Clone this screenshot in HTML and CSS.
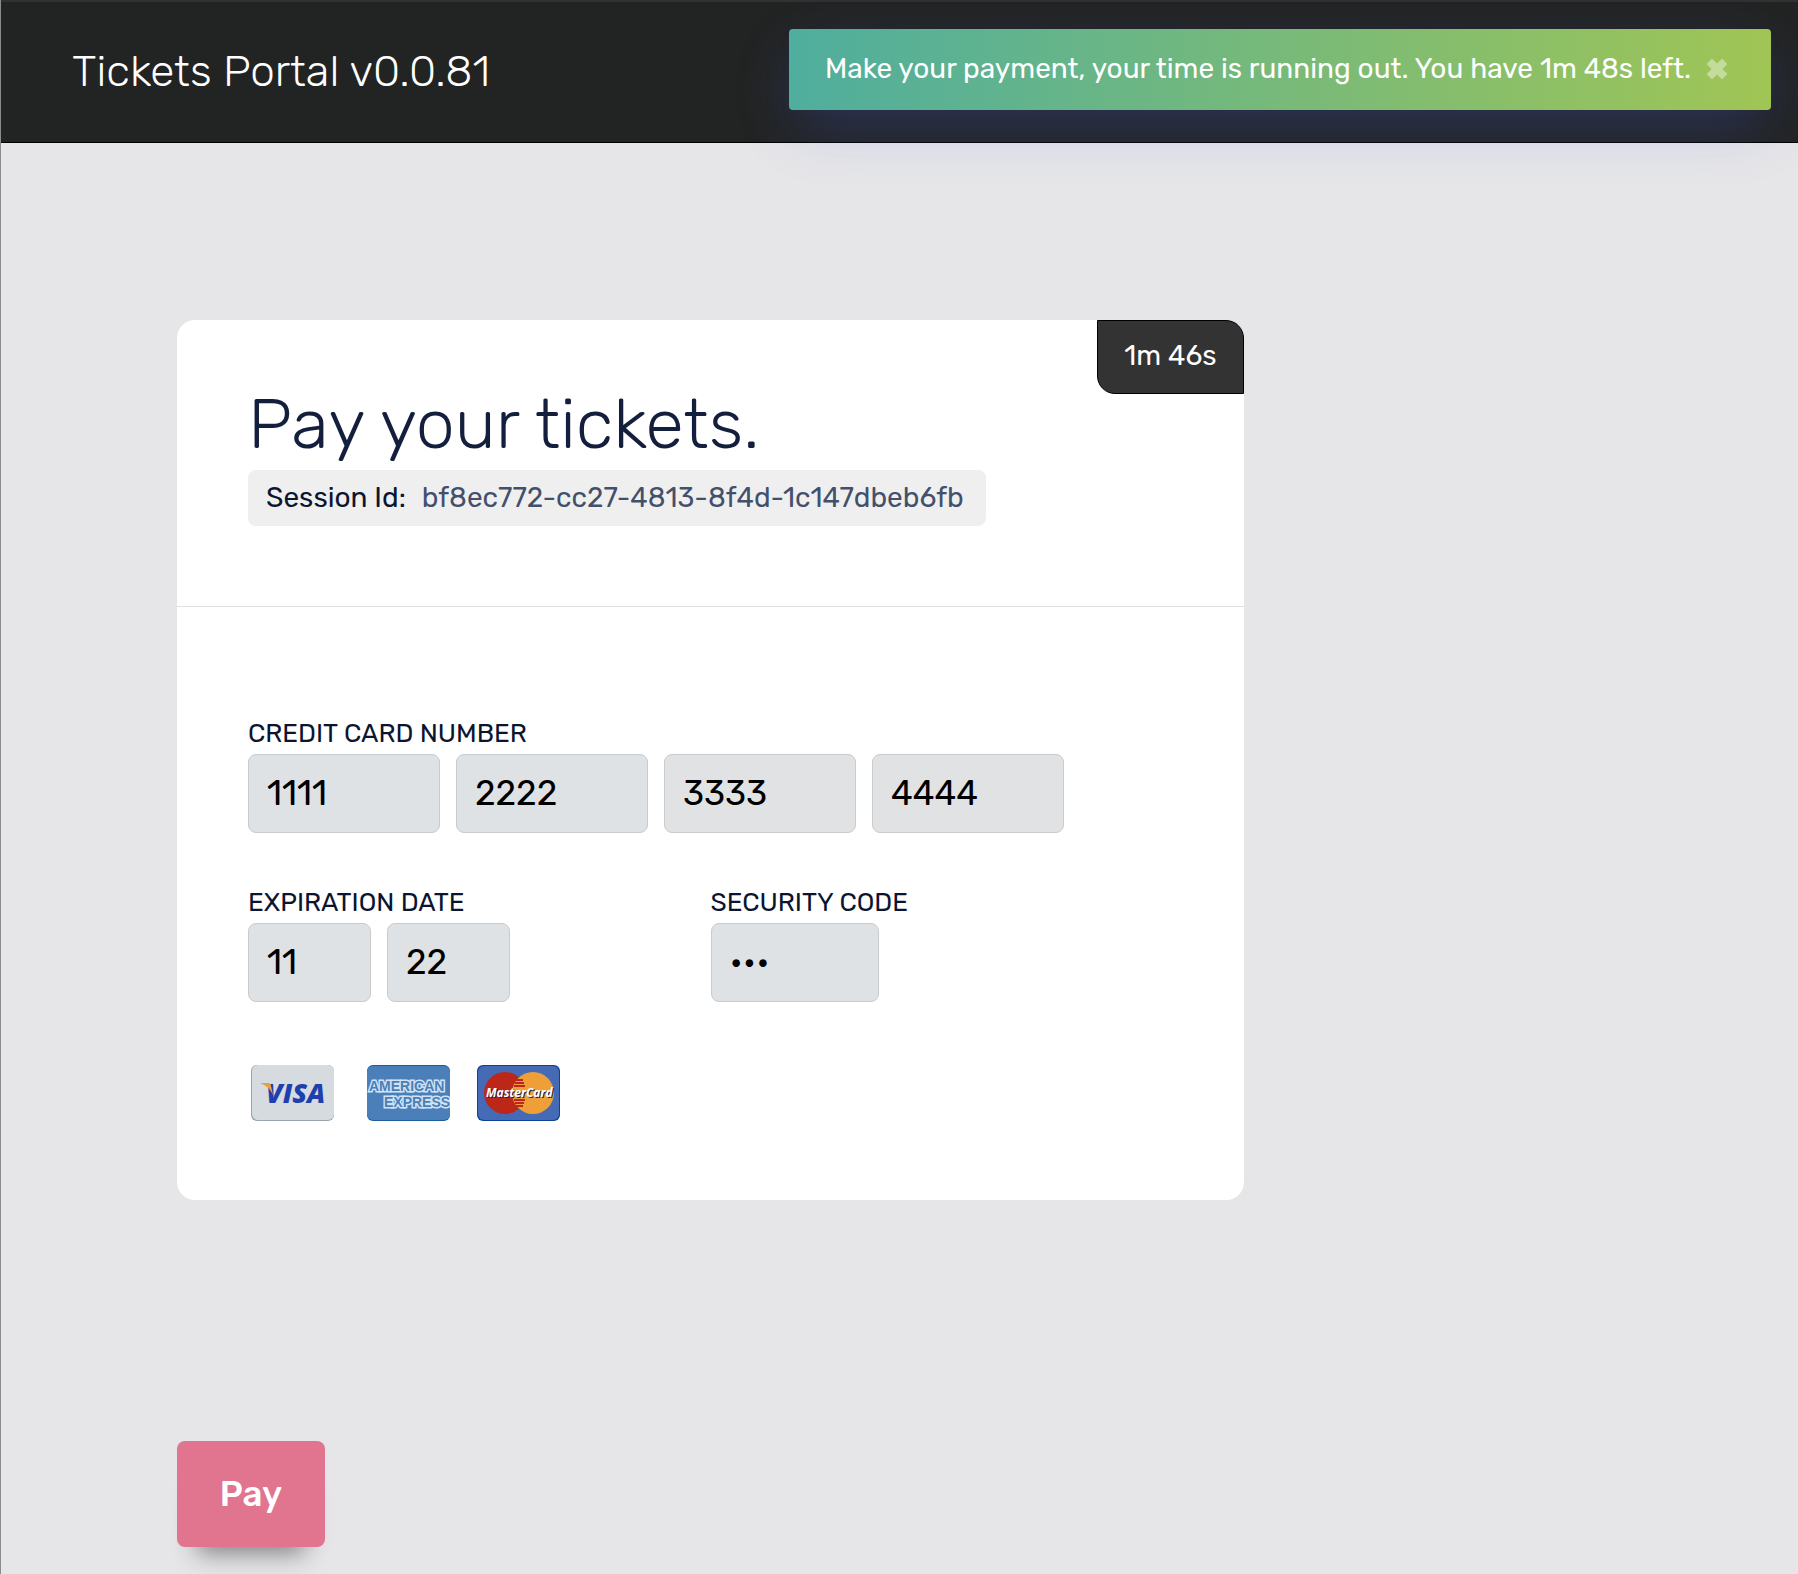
FILE: index.html
```html
<!DOCTYPE html>
<html lang="en">
<head>
<meta charset="utf-8">
<meta name="viewport" content="width=device-width, initial-scale=1">
<title>Tickets Portal</title>
<link rel="stylesheet" href="styles.css">
</head>
<body>
<header class="topbar">
  <div class="brand">Tickets Portal v0.0.81</div>
</header>

<div class="toast" role="status">
  <span class="toast-text">Make your payment, your time is running out. You have 1m 48s left.</span>
  <button class="toast-close" type="button" aria-label="Close">
    <svg viewBox="0 0 20 20" width="20" height="20" aria-hidden="true"><path d="M5 1 10 6 15 1 19 5 14 10 19 15 15 19 10 14 5 19 1 15 6 10 1 5Z" fill="currentColor" stroke="currentColor" stroke-width="2" stroke-linejoin="round"/></svg>
  </button>
</div>

<main class="page">
  <form class="checkout">
    <section class="card">
      <div class="timer">1m 46s</div>
      <div class="card-head">
        <h1 class="heading">Pay your tickets.</h1>
        <p class="session"><span class="session-label">Session Id:</span><span class="session-id">bf8ec772-cc27-4813-8f4d-1c147dbeb6fb</span></p>
      </div>
      <div class="card-body">
        <div class="field">
          <label class="label" for="cc1">CREDIT CARD NUMBER</label>
          <div class="inputs">
            <input class="input input-card" id="cc1" type="text" value="1111">
            <input class="input input-card" type="text" value="2222" aria-label="Card number, second group">
            <input class="input input-card input-plain" type="text" value="3333" aria-label="Card number, third group">
            <input class="input input-card input-plain" type="text" value="4444" aria-label="Card number, fourth group">
          </div>
        </div>
        <div class="field-row">
          <div class="field">
            <label class="label" for="month">EXPIRATION DATE</label>
            <div class="inputs">
              <input class="input input-date" id="month" type="text" value="11">
              <input class="input input-date" type="text" value="22" aria-label="Expiration year">
            </div>
          </div>
          <div class="field">
            <label class="label" for="cvv">SECURITY CODE</label>
            <div class="inputs">
              <input class="input input-code" id="cvv" type="password" value="123">
            </div>
          </div>
        </div>
        <div class="brands">
          <svg class="logo logo-wide" viewBox="0 0 83 56" role="img" aria-label="Visa">
            <rect width="83" height="56" rx="6" fill="#9aa5ab"/>
            <rect x="1" width="82" height="55" rx="6" fill="#d5dbde"/>
            <text x="15" y="38" class="logo-visa">VISA</text>
            <path d="M9 18H17Q20 18 20 21L22 30Q18 21 9 18Z" fill="#e9a03b"/>
          </svg>
          <svg class="logo" viewBox="0 0 83 56" role="img" aria-label="American Express">
            <rect width="83" height="56" rx="6" fill="#1c5c9c"/>
            <rect y="1" width="83" height="54" rx="6" fill="#4a7fb9"/>
            <text x="2" y="26" class="logo-amex">AMERICAN</text>
            <text x="17" y="42" class="logo-amex">EXPRESS</text>
          </svg>
          <svg class="logo" viewBox="0 0 83 56" role="img" aria-label="MasterCard">
            <rect width="83" height="56" rx="6" fill="#0d4397"/>
            <rect x="1" y="1" width="81" height="54" rx="6" fill="#456bb6"/>
            <circle cx="28" cy="28" r="21" fill="#bc271a"/>
            <circle cx="56" cy="28" r="21" fill="#ee9f38"/>
            <path d="M39 15H46M38 18H47M37 21H48M37 35H48M38 38H47M39 41H46" stroke="#bc271a" stroke-width="2"/>
            <text x="10" y="33" class="logo-mc logo-mc-shade">MasterCard</text>
            <text x="9" y="32" class="logo-mc">MasterCard</text>
          </svg>
        </div>
      </div>
    </section>
    <button class="pay" type="submit">Pay</button>
  </form>
</main>
</body>
</html>
```
FILE: styles.css
```css
* {
  box-sizing: border-box;
}

body {
  margin: 0;
  min-height: 100vh;
  background: #e6e6e8;
  border-left: 1px solid #8c8c8e;
  color: #0b1530;
  font-family: Rubik, Roboto, "Liberation Sans", sans-serif;
  font-size: 28px;
}

.topbar {
  display: flex;
  align-items: center;
  min-height: 143px;
  padding: 0 71px 2px;
  background: #222423;
  border-top: 2px solid #303131;
  border-bottom: 1px solid #000;
  color: #fff;
}

.brand {
  font-size: 44px;
  font-weight: 300;
  line-height: 56px;
}

/* Floating notice over the top bar */
.toast {
  position: absolute;
  top: 29px;
  right: 27px;
  display: flex;
  align-items: center;
  justify-content: space-between;
  min-width: 982px;
  height: 81px;
  padding: 0 44px 2px 36px;
  border-radius: 4px;
  background: linear-gradient(90deg, #4fae9e, #a0c555);
  box-shadow: 0 6px 12px -2px rgba(50, 50, 93, 0.1), 0 20px 60px -8px rgba(77, 96, 232, 0.3);
  color: #fff;
}

.toast-close {
  display: flex;
  padding: 0;
  border: 0;
  background: none;
  color: #fff;
  opacity: 0.4;
}

.page {
  padding: 177px 176px 27px;
}

.card {
  position: relative;
  max-width: 1067px;
  border-radius: 18px;
  background: #fff;
}

.timer {
  position: absolute;
  top: 0;
  right: 0;
  min-width: 147px;
  padding: 20px 0 22px;
  border: 1px solid #000;
  border-radius: 0 18px;
  background: #333;
  color: #fff;
  line-height: 30px;
  text-align: center;
}

.card-head {
  padding: 65px 71px 80px;
  border-bottom: 1px solid #dfe0e4;
}

.heading {
  margin: 0 0 5px;
  color: #131f3c;
  font-size: 70px;
  font-weight: 300;
  line-height: 80px;
}

.session {
  display: inline-flex;
  gap: 16px;
  min-width: 738px;
  margin: 0;
  padding: 0 18px;
  border-radius: 8px;
  background: #efefef;
  line-height: 56px;
  vertical-align: top;
}

.session-id {
  color: #43506b;
}

.card-body {
  padding: 111px 71px 79px;
}

.label {
  display: block;
  margin-bottom: 4px;
  font-size: 26px;
  line-height: 32px;
}

.inputs {
  display: flex;
  gap: 16px;
}

.input {
  height: 79px;
  padding: 0 18px 2px;
  border: 1px solid #c9cbcd;
  border-radius: 8px;
  background: #dee2e5;
  color: #000;
  font: inherit;
  font-size: 35px;
}

.input-plain {
  background: #e1e2e4;
}

.input-card {
  width: 192px;
}

.input-date {
  width: 123px;
}

.input-code {
  width: 168px;
}

.field-row {
  display: grid;
  grid-template-columns: 1fr 1fr;
  margin-top: 54px;
}

.brands {
  display: flex;
  gap: 27px;
  margin-top: 63px;
  padding-left: 3px;
}

.logo {
  width: 83px;
  height: 56px;
  overflow: hidden;
}

.logo-wide {
  margin-right: 6px;
}

.logo-visa {
  fill: #1f3fae;
  font: italic 800 27px "Open Sans", sans-serif;
}

.logo-amex {
  fill: #4a7fb9;
  stroke: #cfe3f5;
  stroke-width: 3px;
  paint-order: stroke;
  font: 700 14px "Liberation Sans", sans-serif;
}

.logo-mc {
  fill: #fff;
  font: italic 700 12px "Open Sans", sans-serif;
}

.logo-mc-shade {
  fill: #1c1f4f;
}

.pay {
  display: block;
  min-width: 148px;
  height: 106px;
  margin-top: 241px;
  border: 0;
  border-radius: 8px;
  background: #e1748f;
  box-shadow: 0 26px 24px -20px rgba(0, 0, 0, 0.45);
  color: #fff;
  font: inherit;
  font-size: 35px;
  font-weight: 500;
}
```
